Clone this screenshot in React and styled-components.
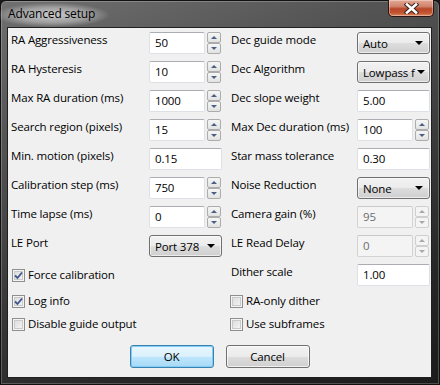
import styled, { createGlobalStyle } from "styled-components";

const GlobalStyle = createGlobalStyle`
    html, body {
        margin: 0;
        padding: 0;
        background: #1a1a1a;
    }
    body {
        font-family: "Segoe UI", "Open Sans", "Noto Sans", sans-serif;
        font-size: 11.5px;
        letter-spacing: -0.15px;
        color: #000;
    }
`

const leftRows = [
    { label: "RA Aggressiveness", kind: "spin", value: "50" },
    { label: "RA Hysteresis", kind: "spin", value: "10" },
    { label: "Max RA duration (ms)", kind: "spin", value: "1000" },
    { label: "Search region (pixels)", kind: "spin", value: "15" },
    { label: "Min. motion (pixels)", kind: "text", value: "0.15" },
    { label: "Calibration step (ms)", kind: "spin", value: "750" },
    { label: "Time lapse (ms)", kind: "spin", value: "0" },
    { label: "LE Port", kind: "select", value: "Port 378" },
];

// the combo is too narrow for its text, Windows shows only "Lowpass f"
const rightRows = [
    { label: "Dec guide mode", kind: "select", value: "Auto" },
    { label: "Dec Algorithm", kind: "select", value: "Lowpass f" },
    { label: "Dec slope weight", kind: "text", value: "5.00" },
    { label: "Max Dec duration (ms)", kind: "spin", value: "100" },
    { label: "Star mass tolerance", kind: "text", value: "0.30" },
    { label: "Noise Reduction", kind: "select", value: "None" },
    { label: "Camera gain (%)", kind: "spin", value: "95", disabled: true },
    { label: "LE Read Delay", kind: "spin", value: "0", disabled: true },
];

function Control({ row }) {
    if (row.kind === "select") {
        return (
            <Select>
                <SelectText>{row.value}</SelectText>
                <Arrow />
            </Select>
        );
    }
    if (row.kind === "text") {
        return <TextBox>{row.value}</TextBox>;
    }
    return (
        <SpinGroup>
            <TextBox $narrow $disabled={row.disabled}>{row.value}</TextBox>
            <SpinCol>
                <SpinBtn $disabled={row.disabled}><Tri $up $disabled={row.disabled} /></SpinBtn>
                <SpinBtn $disabled={row.disabled}><Tri $disabled={row.disabled} /></SpinBtn>
            </SpinCol>
        </SpinGroup>
    );
}

function Check({ label, checked, side }) {
    return (
        <CheckRow $side={side}>
            <Box>
                {checked && (
                    <svg width="9" height="9" viewBox="0 0 9 9">
                        <path d="M1 4.5 L3.5 7 L8 1.5" fill="none" stroke="#3f5590" strokeWidth="1.8" />
                    </svg>
                )}
            </Box>
            <span>{label}</span>
        </CheckRow>
    );
}

function App() {
    const rows = [];
    leftRows.forEach((l, i) => {
        const r = rightRows[i];
        rows.push(
            <Label key={"ll" + i}>{l.label}</Label>,
            <Cell key={"lc" + i}><Control row={l} /></Cell>,
            <Label key={"rl" + i}>{r.label}</Label>,
            <Cell key={"rc" + i}><Control row={r} /></Cell>
        );
    });

    return (
        <>
            <GlobalStyle />
            <Window>
                <TitleBar>
                    <Title>Advanced setup</Title>
                    <CloseBtn>
                        <svg width="15" height="11" viewBox="0 0 15 11">
                            <path d="M3 1.5 L12 9.5 M12 1.5 L3 9.5" stroke="#3b2420" strokeWidth="4.6" strokeLinecap="square" />
                            <path d="M3 1.5 L12 9.5 M12 1.5 L3 9.5" stroke="#fff" strokeWidth="2.6" strokeLinecap="square" />
                        </svg>
                    </CloseBtn>
                </TitleBar>
                <Client>
                    <Form>
                        {rows}
                        <Check label="Force calibration" checked side="left" />
                        <Label>Dither scale</Label>
                        <Cell><TextBox>1.00</TextBox></Cell>
                        <Check label="Log info" checked side="left" />
                        <Check label="RA-only dither" side="right" />
                        <Check label="Disable guide output" side="left" />
                        <Check label="Use subframes" side="right" />
                    </Form>
                    <Buttons>
                        <Button $default>OK</Button>
                        <Button>Cancel</Button>
                    </Buttons>
                </Client>
            </Window>
        </>
    );
}

const Window = styled.div`
    width: 440px;
    height: 385px;
    box-sizing: border-box;
    display: flex;
    flex-direction: column;
    padding: 0 7px 6px 6px;
    border: 1px solid #111;
    border-radius: 6px 6px 0 0;
    background: linear-gradient(160deg, #707070 0%, #555 25%, #3a3a3a 55%, #262626 80%, #1b1b1b 100%);
    box-shadow: inset 0 0 0 1px rgba(255,255,255,0.22);
`

const TitleBar = styled.div`
    height: 26px;
    display: flex;
    justify-content: space-between;
    align-items: flex-start;
`

const Title = styled.span`
    margin-top: 2px;
    margin-left: -12px;
    padding: 3px 14px 5px 13px;
    font-size: 12px;
    line-height: 16px;
    color: #000;
    background: radial-gradient(ellipse at center, rgba(235,235,235,0.75) 0%, rgba(210,210,210,0.5) 45%, rgba(160,160,160,0) 72%);
`

const CloseBtn = styled.div`
    width: 46px;
    height: 17px;
    margin-top: -1px;
    margin-right: -2px;
    box-sizing: border-box;
    display: flex;
    align-items: center;
    justify-content: center;
    border: 1px solid #2d1410;
    border-top: none;
    border-radius: 0 0 5px 5px;
    background: linear-gradient(#e2a894 0%, #d0836c 40%, #b8472a 55%, #c2532f 80%, #da8a63 100%);
    box-shadow: inset 0 0 0 1px rgba(255,255,255,0.35);
`

const Client = styled.div`
    flex: 1;
    background: #f0f0f0;
    border: 1px solid #202020;
    padding: 4px 3px 0 3px;
    display: flex;
    flex-direction: column;
`

const Form = styled.div`
    display: grid;
    grid-template-columns: 138px 82px 126px 73px;
    grid-template-rows: repeat(9, 22px) 16px 16px;
    row-gap: 7px;
`

const Label = styled.div`
    align-self: start;
    line-height: 16px;
    white-space: nowrap;
`

const Cell = styled.div`
    display: flex;
    align-items: flex-start;
`

const TextBox = styled.div`
    box-sizing: border-box;
    width: ${p => (p.$narrow ? "56px" : "73px")};
    height: 22px;
    padding: 0 5px;
    line-height: 20px;
    background: ${p => (p.$disabled ? "#f4f4f4" : "#fff")};
    color: ${p => (p.$disabled ? "#6d6d6d" : "#000")};
    border: 1px solid ${p => (p.$disabled ? "#d3d3d3" : "#dde1e6")};
    border-top-color: ${p => (p.$disabled ? "#c8c8c8" : "#abadb3")};
    border-radius: 2px;
`

const SpinGroup = styled.div`
    display: flex;
    gap: 2px;
`

const SpinCol = styled.div`
    width: 14px;
    height: 22px;
    display: flex;
    flex-direction: column;
`

const SpinBtn = styled.div`
    flex: 1;
    box-sizing: border-box;
    display: flex;
    align-items: center;
    justify-content: center;
    border: 1px solid ${p => (p.$disabled ? "#cfcfcf" : "#acacac")};
    border-radius: 2px;
    background: ${p => (p.$disabled ? "#f4f4f4" : "linear-gradient(#f6f6f6, #e2e2e2)")};
`

const Tri = styled.span`
    width: 0;
    height: 0;
    border-left: 3px solid transparent;
    border-right: 3px solid transparent;
    ${p => (p.$up ? "border-bottom" : "border-top")}: 3px solid ${p => (p.$disabled ? "#a8a8a8" : "#4b5f84")};
`

const Select = styled.div`
    box-sizing: border-box;
    width: 73px;
    height: 22px;
    display: flex;
    align-items: center;
    padding: 0 6px 0 5px;
    border: 1px solid #707070;
    border-radius: 3px;
    background: linear-gradient(#f2f2f2 0%, #ebebeb 50%, #dddddd 51%, #cfcfcf 100%);
    box-shadow: inset 0 0 0 1px rgba(255,255,255,0.6);
`

const SelectText = styled.span`
    flex: 1;
    white-space: nowrap;
    margin-right: 2px;
`

const Arrow = styled.span`
    width: 0;
    height: 0;
    border-left: 4px solid transparent;
    border-right: 4px solid transparent;
    border-top: 4px solid #000;
`

const CheckRow = styled.div`
    grid-column: ${p => (p.$side === "left" ? "1 / 3" : "3 / 5")};
    display: flex;
    align-items: center;
    gap: 3px;
    padding-left: ${p => (p.$side === "left" ? "1px" : "0")};
    margin-left: ${p => (p.$side === "left" ? "0" : "-1px")};
    white-space: nowrap;
    line-height: 16px;
`

const Box = styled.span`
    width: 13px;
    height: 13px;
    box-sizing: border-box;
    display: flex;
    align-items: center;
    justify-content: center;
    border: 1px solid #8e8f8f;
    background: linear-gradient(135deg, #d8d8d8, #f8f8f8);
    box-shadow: inset 0 0 0 1px #f4f4f4, inset 0 0 0 2px #c9c9c9;
`

const Buttons = styled.div`
    display: flex;
    justify-content: center;
    gap: 12px;
    margin-top: 13px;
`

const Button = styled.div`
    box-sizing: border-box;
    width: 84px;
    height: 23px;
    display: flex;
    align-items: center;
    justify-content: center;
    border: 1px solid ${p => (p.$default ? "#3c7fb1" : "#707070")};
    border-radius: 3px;
    background: ${p => (p.$default
        ? "linear-gradient(#eaf6fd 0%, #d9f0fc 50%, #bee6fd 51%, #a7d9f5 100%)"
        : "linear-gradient(#f2f2f2 0%, #ebebeb 50%, #dddddd 51%, #cfcfcf 100%)")};
    box-shadow: inset 0 0 0 1px ${p => (p.$default ? "#7fd0f4" : "rgba(255,255,255,0.7)")};
`

export default App;
